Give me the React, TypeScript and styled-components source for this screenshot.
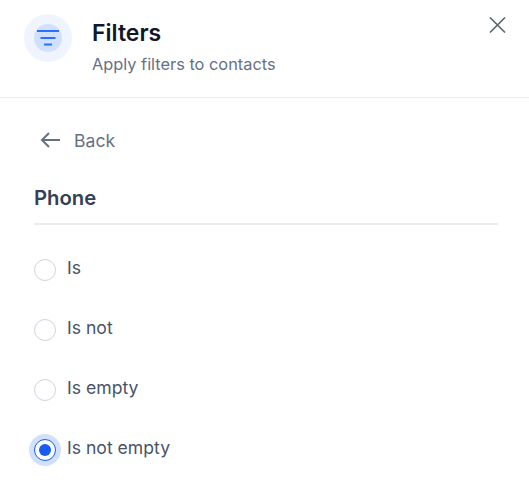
import React from "react";
import styled, { createGlobalStyle } from "styled-components";

const GlobalStyle = createGlobalStyle`
	html, body {
		margin: 0;
		padding: 0;
		background: #fff;
		font-family: "Inter", "Liberation Sans", sans-serif;
	}
`;

const Panel = styled.div`
	width: 529px;
	height: 490px;
	overflow: hidden;
	background: #fff;
`;

const Header = styled.header`
	display: flex;
	align-items: flex-start;
	height: 98px;
	box-sizing: border-box;
	padding: 14px 22px 0 24px;
	border-bottom: 1px solid #eaecf0;
`;

const IconHalo = styled.div`
	display: flex;
	align-items: center;
	justify-content: center;
	width: 48px;
	height: 48px;
	border-radius: 50%;
	background: #eff4ff;
	flex-shrink: 0;
`;

const IconCore = styled.div`
	display: flex;
	align-items: center;
	justify-content: center;
	width: 28px;
	height: 28px;
	border-radius: 50%;
	background: #d1e0ff;
`;

const HeaderText = styled.div`
	flex: 1;
	margin-left: 20px;
	padding-top: 1px;
`;

const Title = styled.h1`
	margin: 0;
	font-size: 23px;
	line-height: 36px;
	font-weight: 600;
	color: #101828;
`;

const Subtitle = styled.p`
	margin: 1px 0 0;
	font-size: 16.35px;
	line-height: 24px;
	color: #667085;
`;

const CloseButton = styled.button`
	display: flex;
	padding: 0;
	border: 0;
	background: none;
	color: #5f6570;
	cursor: pointer;
`;

const Body = styled.div`
	padding: 29px 31px 0 34px;
`;

const BackLink = styled.button`
	display: flex;
	align-items: center;
	gap: 10px;
	height: 26px;
	padding: 0 0 0 4px;
	border: 0;
	background: none;
	font: inherit;
	font-size: 17.6px;
	color: #667085;
	cursor: pointer;
`;

const FieldName = styled.h2`
	margin: 31px 0 0;
	padding-bottom: 11px;
	font-size: 20.3px;
	line-height: 28px;
	font-weight: 600;
	color: #344054;
	border-bottom: 2px solid #eaecf0;
`;

const Options = styled.div`
	display: flex;
	flex-direction: column;
	gap: 32px;
	margin-top: 29px;
`;

const Option = styled.label`
	display: flex;
	align-items: flex-start;
	gap: 11px;
	height: 28px;
	font-size: 17.6px;
	line-height: 28px;
	color: #475467;
	cursor: pointer;
`;

const Radio = styled.span<{ $checked: boolean }>`
	display: flex;
	align-items: center;
	justify-content: center;
	width: 22px;
	height: 22px;
	margin-top: 5px;
	box-sizing: border-box;
	border-radius: 50%;
	background: #fff;
	border: 1px solid ${(p) => (p.$checked ? "#155eef" : "#d0d5dd")};
	box-shadow: ${(p) => (p.$checked ? "0 0 0 5px #d1e0ff" : "none")};
	flex-shrink: 0;
`;

const RadioDot = styled.span`
	width: 12px;
	height: 12px;
	border-radius: 50%;
	background: #155eef;
`;

const options = ["Is", "Is not", "Is empty", "Is not empty"];

const App = () => {
	const selected = "Is not empty";

	return (
		<Panel>
			<GlobalStyle />
			<Header>
				<IconHalo>
					<IconCore>
						<svg width="24" height="24" viewBox="0 0 24 24" fill="none">
							<path
								d="M1 5h22M4.5 12h15M8 18.6h8"
								stroke="#2970ff"
								strokeWidth="2"
							/>
						</svg>
					</IconCore>
				</IconHalo>
				<HeaderText>
					<Title>Filters</Title>
					<Subtitle>Apply filters to contacts</Subtitle>
				</HeaderText>
				<CloseButton aria-label="Close">
					<svg width="20" height="20" viewBox="0 0 20 20" fill="none">
						<path
							d="M3 3.5l15 15M18 3.5l-15 15"
							stroke="currentColor"
							strokeWidth="1.7"
						/>
					</svg>
				</CloseButton>
			</Header>
			<Body>
				<BackLink>
					<svg width="26" height="20" viewBox="0 0 26 20" fill="none">
						<path
							d="M22 10H4M11 3l-7 7 7 7"
							stroke="currentColor"
							strokeWidth="2"
						/>
					</svg>
					Back
				</BackLink>
				<FieldName>Phone</FieldName>
				<Options>
					{options.map((option) => (
						<Option key={option}>
							<Radio $checked={option === selected}>
								{option === selected && <RadioDot />}
							</Radio>
							{option}
						</Option>
					))}
				</Options>
			</Body>
		</Panel>
	);
};

export default App;
